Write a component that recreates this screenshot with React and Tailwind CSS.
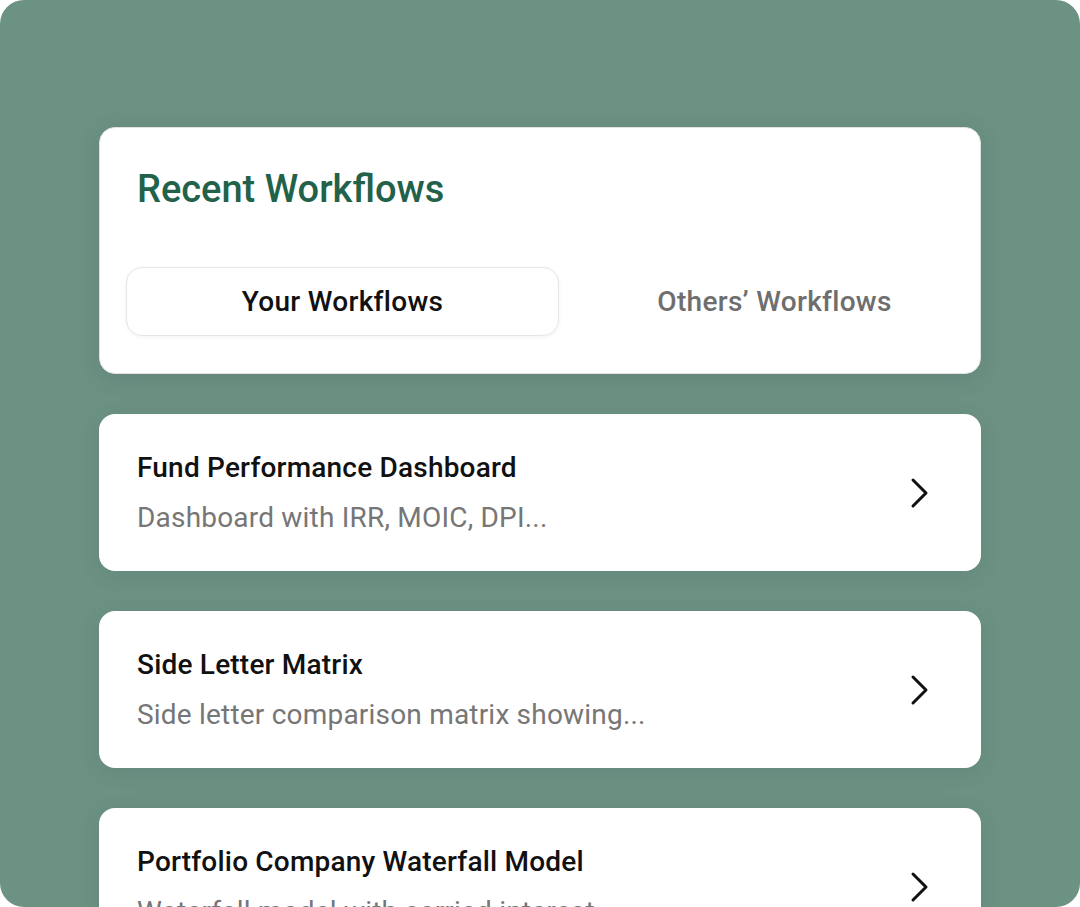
import React from "react";

const items = [
  { title: "Fund Performance Dashboard", sub: "Dashboard with IRR, MOIC, DPI..." },
  { title: "Side Letter Matrix", sub: "Side letter comparison matrix showing..." },
  { title: "Portfolio Company Waterfall Model", sub: "Waterfall model with carried interest..." },
];

function Chevron() {
  return (
    <svg width="20" height="32" viewBox="0 0 20 32" fill="none" className="shrink-0 mr-[51px]">
      <path d="M3 3 L16 16 L3 29" stroke="#111" strokeWidth="3" strokeLinecap="round" strokeLinejoin="round" />
    </svg>
  );
}

export default function App() {
  return (
    <div className="w-[1080px] h-[907px] bg-white" style={{ fontFamily: "Roboto, 'Noto Sans', sans-serif" }}>
      <div className="w-[1080px] h-[907px] bg-[#6c9284] rounded-[24px] overflow-hidden pt-[127px] px-[99px] flex flex-col gap-[40px]">
        <div className="shrink-0 h-[247px] rounded-[16px] bg-white border border-[#e2e2e2] shadow-[0_4px_24px_rgba(0,0,0,0.10)] pt-[38px] flex flex-col">
          <div className="pl-[37px] text-[38px] leading-[46px] font-medium text-[#22614a]">Recent Workflows</div>
          <div className="mt-[55px] ml-[26px] grid grid-cols-[433px_431px]">
            <div className="h-[69px] rounded-[16px] border border-[#e6e6e6] bg-white shadow-[0_1px_4px_rgba(0,0,0,0.05)] flex items-center justify-center text-[28px] tracking-[0.3px] font-medium text-[#111]">
              Your Workflows
            </div>
            <div className="h-[69px] flex items-center justify-center text-[28px] tracking-[0.3px] font-medium text-[#6e6e6e]">
              Others’ Workflows
            </div>
          </div>
        </div>
        {items.map((it) => (
          <div key={it.title} className="shrink-0 h-[157px] rounded-[16px] bg-white shadow-[0_4px_24px_rgba(0,0,0,0.08)] flex items-center justify-between pl-[38px]">
            <div className="flex flex-col gap-[14px]">
              <div className="text-[28px] leading-[36px] tracking-[0.2px] font-medium text-[#111]">{it.title}</div>
              <div className="text-[28px] leading-[36px] tracking-[0.2px] text-[#767676]">{it.sub}</div>
            </div>
            <Chevron />
          </div>
        ))}
      </div>
    </div>
  );
}
